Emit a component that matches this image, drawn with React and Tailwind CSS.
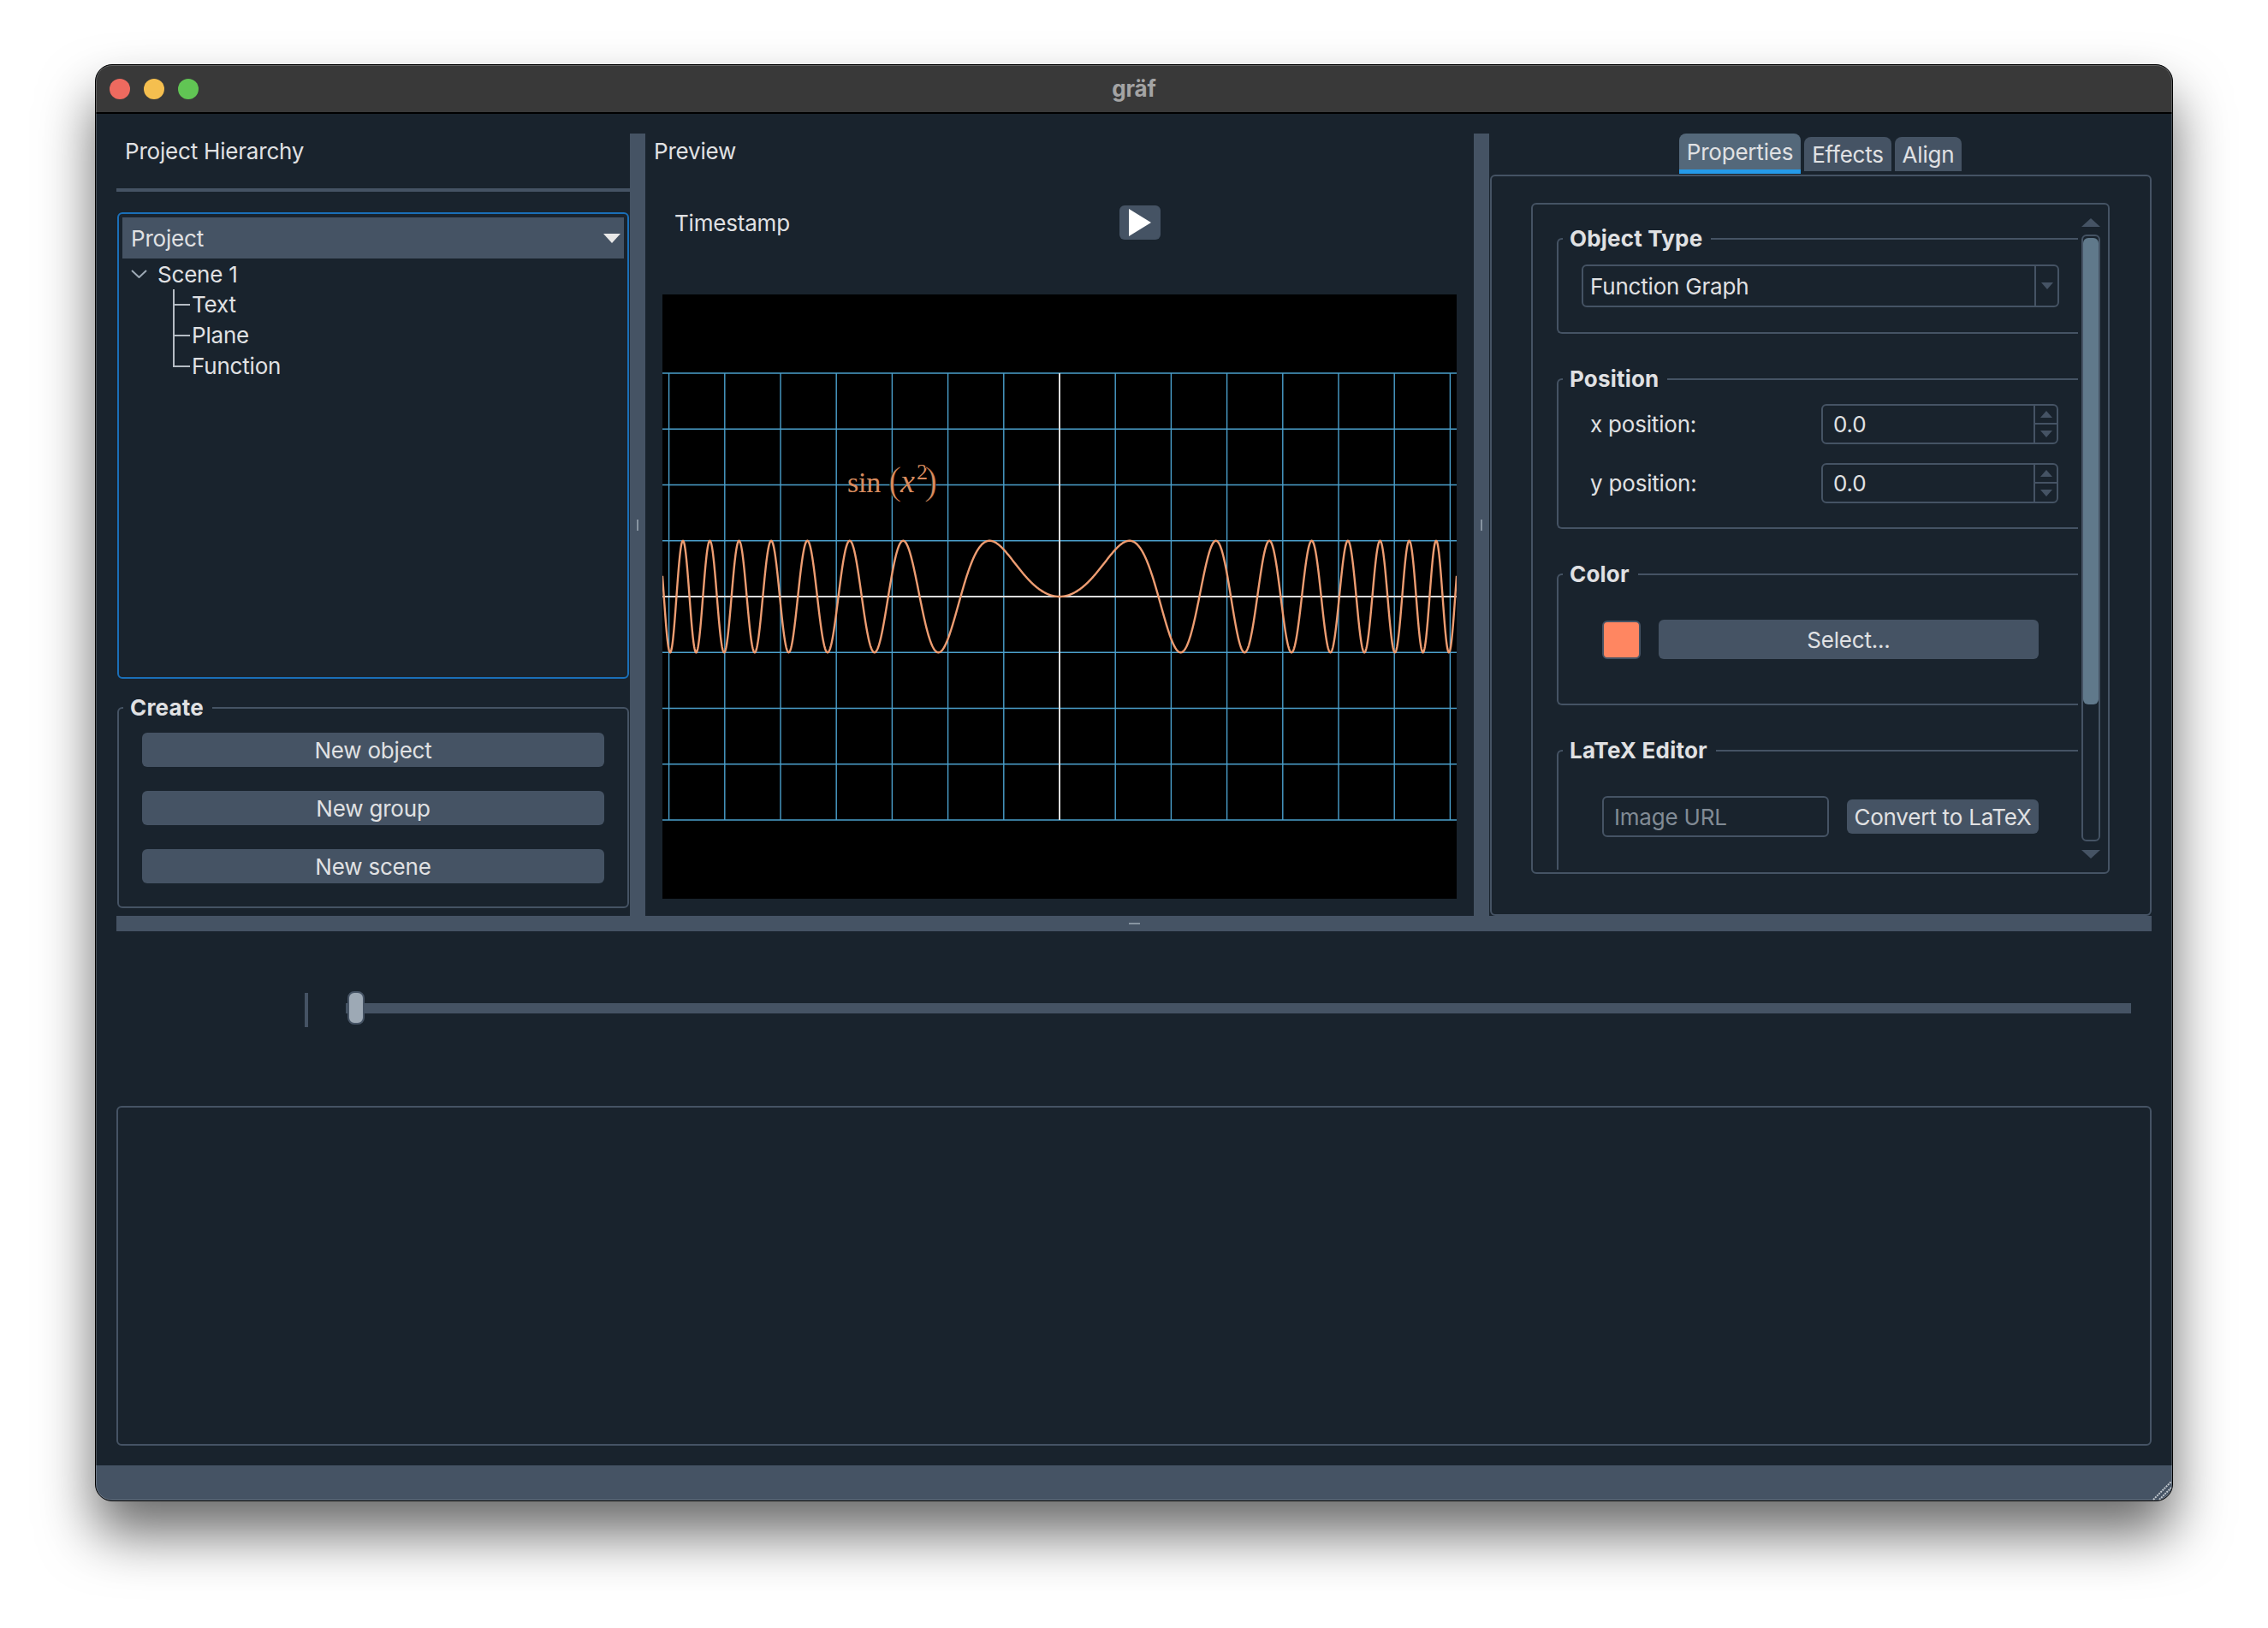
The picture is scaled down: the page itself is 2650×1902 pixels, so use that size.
import { useMemo } from "react";

const TREE_CHILDREN = ["Text", "Plane", "Function"];
const GRID_STEPS = [-7, -6, -5, -4, -3, -2, -1, 1, 2, 3, 4, 5, 6, 7];
const H_STEPS = [-4, -3, -2, -1, 1, 2, 3, 4];

function Tri({ up = false, className = "" }) {
  return (
    <svg width="14" height="8" viewBox="0 0 14 8" className={className}>
      <polygon points={up ? "7,0 14,8 0,8" : "0,0 14,0 7,8"} fill="currentColor" />
    </svg>
  );
}

function Group({ title, className = "", children }) {
  return (
    <div className={`relative border-2 border-[#455364] rounded-md ${className}`}>
      <div className="absolute -top-[19px] left-[5px] pl-2 pr-[10px] bg-[#19232d] leading-[36px] font-bold tracking-[0.2px] whitespace-nowrap">
        {title}
      </div>
      {children}
    </div>
  );
}

function Btn({ className = "", children }) {
  return (
    <div className={`flex items-center justify-center bg-[#455364] rounded-md ${className}`}>{children}</div>
  );
}

function SpinRow({ label }) {
  return (
    <div className="flex items-center">
      <div className="w-[307px] pl-[37px]">{label}</div>
      <div className="w-[277px] h-[47px] flex border-2 border-[#455364] rounded-md">
        <div className="flex-1 pl-3 leading-[43px]">0.0</div>
        <div className="w-[27px] border-l-2 border-[#455364] flex flex-col text-[#455364]">
          <div className="h-[22px] flex items-center justify-center border-b-2 border-[#455364]">
            <Tri up />
          </div>
          <div className="flex-1 flex items-center justify-center">
            <Tri />
          </div>
        </div>
      </div>
    </div>
  );
}

function Plot() {
  const curve = useMemo(() => {
    const pts = [];
    for (let px = 0; px <= 928; px += 0.4) {
      const x = (px - 464) / 65.2;
      pts.push(`${px.toFixed(1)},${(353 - 65.25 * Math.sin(x * x)).toFixed(2)}`);
    }
    return pts.join(" ");
  }, []);

  return (
    <svg width="928" height="706" viewBox="0 0 928 706" className="block bg-black">
      {GRID_STEPS.map((n) => (
        <line key={n} x1={464 + n * 65.2} x2={464 + n * 65.2} y1="92" y2="614" stroke="#4ba0cc" strokeWidth="1.4" />
      ))}
      {H_STEPS.map((n) => (
        <line key={n} x1="0" x2="928" y1={353 + n * 65.25} y2={353 + n * 65.25} stroke="#4ba0cc" strokeWidth="1.4" />
      ))}
      <line x1="464" x2="464" y1="92" y2="614" stroke="#dcdcdc" strokeWidth="2" />
      <line x1="0" x2="928" y1="353" y2="353" stroke="#dcdcdc" strokeWidth="2" />
      <polyline points={curve} fill="none" stroke="#ee9d72" strokeWidth="2.4" />
      <g fill="#d98c5f" fontFamily="'Liberation Serif', serif">
        <text x="216" y="231" fontSize="34">sin</text>
        <text x="264" y="233" fontSize="46" stroke="#000" strokeWidth="0.8">(</text>
        <text x="278" y="231" fontSize="38" fontStyle="italic">x</text>
        <text x="297" y="216" fontSize="26">2</text>
        <text x="306" y="233" fontSize="46" stroke="#000" strokeWidth="0.8">)</text>
      </g>
    </svg>
  );
}

export default function App() {
  return (
    <div className="min-h-[1902px] bg-white pt-[75px] pl-[111px] font-['Inter',sans-serif] text-[26px] tracking-[-0.2px] text-[#e0e1e3]">
      <div className="relative w-[2428px] h-[1679px] flex flex-col bg-[#19232d] border border-black rounded-[20px] overflow-hidden shadow-[0_38px_64px_rgba(0,0,0,0.58)]">
        {/* Title bar */}
        <div className="h-[57px] shrink-0 flex items-center pl-4 relative bg-[#393939] border-b-2 border-black">
          <div className="flex gap-4">
            <span className="w-6 h-6 rounded-full bg-[#ee6a5f]" />
            <span className="w-6 h-6 rounded-full bg-[#f5bf4f]" />
            <span className="w-6 h-6 rounded-full bg-[#61c554]" />
          </div>
          <div className="absolute inset-x-0 text-center font-bold text-[#a4a4a4]">gräf</div>
        </div>

        <div className="flex-1 px-6 pt-[23px] flex flex-col">
          {/* Top panes */}
          <div className="h-[914px] flex">
            {/* Project tree */}
            <div className="w-[600px] flex flex-col">
              <div className="h-[64px] pl-[10px] leading-[42px]">Project Hierarchy</div>
              <div className="h-1 bg-[#455364]" />
              <div className="mt-6 mx-px h-[545px] border-2 border-[#1a6fb8] rounded-md p-1">
                <div className="h-12 bg-[#455364] flex items-center justify-between pl-[10px] pr-[4px]">
                  <span>Project</span>
                  <svg width="20" height="11" viewBox="0 0 20 11">
                    <polygon points="0,0 20,0 10,11" fill="#e8e8e8" />
                  </svg>
                </div>
                <div className="h-9 flex items-center pl-[10px]">
                  <svg width="19" height="10" viewBox="0 0 19 10" className="mr-[12px]">
                    <path d="M1 1 L9.5 9 L18 1" fill="none" stroke="#9da9b5" strokeWidth="2" />
                  </svg>
                  <span>Scene 1</span>
                </div>
                {TREE_CHILDREN.map((name, i) => (
                  <div key={name} className="h-9 flex items-center pl-[59px]">
                    <svg width="22" height="36" viewBox="0 0 22 36" className="shrink-0">
                      <path
                        d={i === 2 ? "M1 0 V18 H20" : "M1 0 V36 M1 18 H20"}
                        fill="none"
                        stroke="#b5bcc4"
                        strokeWidth="2"
                      />
                    </svg>
                    <span className="-translate-y-px">{name}</span>
                  </div>
                ))}
              </div>
              <Group title="Create" className="mt-[33px] mx-px h-[235px] px-[27px] pt-[28px] flex flex-col gap-[28px]">
                <Btn className="h-10">New object</Btn>
                <Btn className="h-10">New group</Btn>
                <Btn className="h-10">New scene</Btn>
              </Group>
            </div>

            <div className="w-[18px] bg-[#455364] flex items-center justify-center">
              <div className="w-0.5 h-[13px] bg-[#8794a1]" />
            </div>

            {/* Preview */}
            <div className="w-[968px] flex flex-col">
              <div className="h-[42px] pl-[10px] leading-[42px]">Preview</div>
              <div className="mt-[42px] h-10 flex items-center">
                <div className="w-[554px] pl-[34px]">Timestamp</div>
                <Btn className="w-12 h-10">
                  <svg width="26" height="32" viewBox="0 0 26 32">
                    <polygon points="0,0 26,16 0,32" fill="#ffffff" />
                  </svg>
                </Btn>
              </div>
              <div className="mt-16 mx-5">
                <Plot />
              </div>
            </div>

            <div className="w-[18px] bg-[#455364] flex items-center justify-center">
              <div className="w-0.5 h-[13px] bg-[#8794a1]" />
            </div>

            {/* Properties */}
            <div className="w-[774px] flex flex-col">
              <div className="h-[48px] flex pl-[222px] gap-1">
                <div className="w-[142px] h-[47px] bg-[#54687a] rounded-t-lg border-b-[5px] border-[#259ae9] text-center leading-[44px]">
                  Properties
                </div>
                <div className="w-[102px] h-10 mt-1 bg-[#455364] rounded-t-lg text-center leading-[42px]">Effects</div>
                <div className="w-[78px] h-10 mt-1 bg-[#455364] rounded-t-lg text-center leading-[42px]">Align</div>
              </div>
              <div className="flex-1 ml-px border-2 border-[#455364] rounded-md pl-[46px] pt-[31px]">
                <div className="w-[676px] h-[784px] border-2 border-[#455364] rounded-md flex pb-[3px]">
                  <div className="w-[637px] h-[777px] overflow-hidden pl-[28px] pt-[39px] flex flex-col gap-[52px]">
                    <Group title="Object Type" className="h-[112px] shrink-0 border-r-0 rounded-r-none pl-[27px] pt-[29px]">
                      <div className="w-[558px] h-[50px] flex border-2 border-[#455364] rounded-md">
                        <div className="flex-1 pl-[8px] leading-[48px]">Function Graph</div>
                        <div className="w-[27px] border-l-2 border-[#455364] flex items-center justify-center text-[#455364]">
                          <Tri />
                        </div>
                      </div>
                    </Group>
                    <Group title="Position" className="h-[176px] shrink-0 border-r-0 rounded-r-none pt-[28px] flex flex-col gap-[22px]">
                      <SpinRow label="x position:" />
                      <SpinRow label="y position:" />
                    </Group>
                    <Group title="Color" className="h-[154px] shrink-0 border-r-0 rounded-r-none pt-[52px] pl-[51px]">
                      <div className="flex items-center gap-[21px]">
                        <div className="w-[45px] h-[45px] bg-[#ff8661] border-2 border-[#455364] rounded-md" />
                        <Btn className="w-[444px] h-[46px]">Select...</Btn>
                      </div>
                    </Group>
                    <Group title="LaTeX Editor" className="h-[200px] shrink-0 border-r-0 rounded-r-none pt-[52px] pl-[51px]">
                      <div className="flex items-center gap-[21px]">
                        <div className="w-[265px] h-[48px] border-2 border-[#455364] rounded-md pl-[12px] leading-[45px] text-[#818b95]">
                          Image URL
                        </div>
                        <Btn className="w-[224px] h-10 whitespace-nowrap">Convert to LaTeX</Btn>
                      </div>
                    </Group>
                  </div>
                  <div className="ml-[4px] w-[22px] flex flex-col items-center text-[#455364] pt-[16px]">
                    <svg width="22" height="10" viewBox="0 0 22 10">
                      <polygon points="11,0 22,10 0,10" fill="currentColor" />
                    </svg>
                    <div className="mt-[9px] w-[22px] h-[709px] border-2 border-[#455364] rounded-md pt-[2px] flex justify-center">
                      <div className="w-[18px] h-[545px] bg-[#60798b] rounded-md" />
                    </div>
                    <svg width="22" height="10" viewBox="0 0 22 10" className="mt-[10px]">
                      <polygon points="0,0 22,0 11,10" fill="currentColor" />
                    </svg>
                  </div>
                </div>
              </div>
            </div>
          </div>

          {/* Horizontal splitter */}
          <div className="h-[18px] bg-[#455364] flex items-center justify-center">
            <div className="w-[13px] h-0.5 bg-[#8794a1]" />
          </div>

          {/* Timeline slider */}
          <div className="h-[204px] pb-6 pl-[220px] pr-6 flex items-center">
            <div className="w-1 h-10 bg-[#455364] translate-y-[2px]" />
            <div className="ml-[44px] flex-1 h-3 relative bg-[#455364]">
              <div className="absolute left-[2px] -top-[14px] w-5 h-[39px] bg-[#9da9b5] border-2 border-[#455364] rounded-lg" />
            </div>
          </div>

          {/* Log box */}
          <div className="h-[397px] border-2 border-[#455364] rounded-md" />
        </div>

        {/* Status bar */}
        <div className="h-[41px] mt-[23px] shrink-0 bg-[#455364] relative">
          <svg width="24" height="24" viewBox="0 0 24 24" className="absolute right-0 bottom-0">
            <path d="M2 23 L23 2 M9 23 L23 9 M16 23 L23 16" stroke="#c2c8ce" strokeWidth="2" strokeDasharray="2 1" fill="none" />
          </svg>
        </div>

        <div className="absolute inset-0 rounded-[19px] border border-white/20 pointer-events-none" />
      </div>
    </div>
  );
}
